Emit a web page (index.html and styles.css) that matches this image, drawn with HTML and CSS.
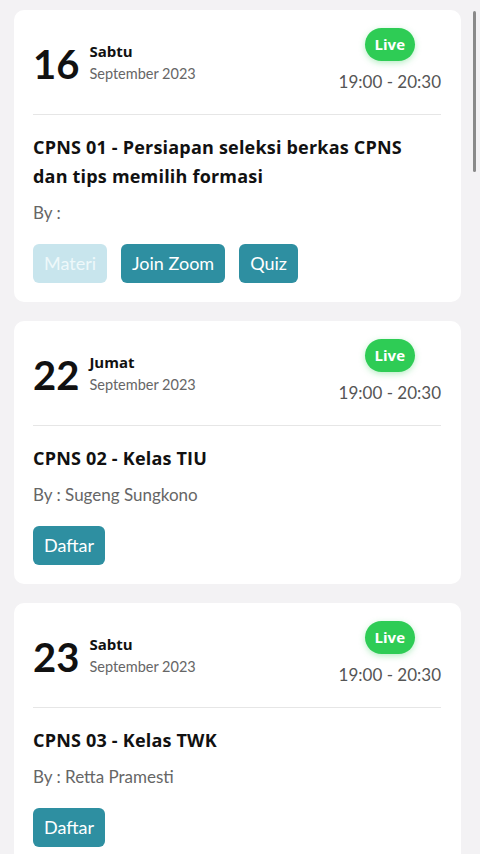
FILE: index.html
```html
<!DOCTYPE html>
<html>
<head>
<meta charset="utf-8">
<link rel="stylesheet" href="styles.css">
</head>
<body>
<div class="list">
  <div class="card">
    <div class="head">
      <div class="date">
        <div class="num">16</div>
        <div class="dm">
          <div class="day">Sabtu</div>
          <div class="month">September 2023</div>
        </div>
      </div>
      <div class="right">
        <span class="live">Live</span>
        <div class="time">19:00 - 20:30</div>
      </div>
    </div>
    <div class="body">
      <div class="title">CPNS 01 - Persiapan seleksi berkas CPNS dan tips memilih formasi</div>
      <div class="by">By :</div>
      <div class="btns">
        <span class="btn disabled">Materi</span>
        <span class="btn">Join Zoom</span>
        <span class="btn">Quiz</span>
      </div>
    </div>
  </div>

  <div class="card">
    <div class="head">
      <div class="date">
        <div class="num">22</div>
        <div class="dm">
          <div class="day">Jumat</div>
          <div class="month">September 2023</div>
        </div>
      </div>
      <div class="right">
        <span class="live">Live</span>
        <div class="time">19:00 - 20:30</div>
      </div>
    </div>
    <div class="body">
      <div class="title">CPNS 02 - Kelas TIU</div>
      <div class="by">By : Sugeng Sungkono</div>
      <div class="btns">
        <span class="btn">Daftar</span>
      </div>
    </div>
  </div>

  <div class="card">
    <div class="head">
      <div class="date">
        <div class="num">23</div>
        <div class="dm">
          <div class="day">Sabtu</div>
          <div class="month">September 2023</div>
        </div>
      </div>
      <div class="right">
        <span class="live">Live</span>
        <div class="time">19:00 - 20:30</div>
      </div>
    </div>
    <div class="body">
      <div class="title">CPNS 03 - Kelas TWK</div>
      <div class="by">By : Retta Pramesti</div>
      <div class="btns">
        <span class="btn">Daftar</span>
      </div>
    </div>
  </div>
</div>
<div class="scrollbar"></div>
</body>
</html>
```
FILE: styles.css
```css
html, body {
  margin: 0;
  padding: 0;
  background: #f3f2f4;
  font-family: "Lato", "Noto Sans", sans-serif;
  color: #111;
  overflow: hidden;
  height: 854px;
}
.list {
  padding: 10px 19px 0 14px;
  display: flex;
  flex-direction: column;
  gap: 19px;
}
.card {
  background: #fff;
  border-radius: 10px;
  padding: 18px 20px 19px 19px;
}
.head {
  display: flex;
  justify-content: space-between;
  align-items: flex-start;
  padding-bottom: 21px;
  border-bottom: 1px solid #e6e6e6;
}
.date {
  display: flex;
  align-items: flex-start;
  margin-top: 14px;
}
.num {
  font-size: 40px;
  font-weight: 700;
  line-height: 40px;
  margin-top: 2px;
}
.dm {
  margin-left: 10px;
}
.day {
  font-family: "Open Sans", sans-serif;
  font-size: 15px;
  font-weight: 700;
  line-height: 18px;
}
.month {
  font-size: 14.5px;
  color: #666;
  line-height: 18px;
  margin-top: 5px;
}
.right {
  display: flex;
  flex-direction: column;
  align-items: center;
}
.live {
  font-family: "Open Sans", sans-serif;
  background: #2ecc55;
  color: #fff;
  font-weight: 700;
  font-size: 15px;
  line-height: 33px;
  height: 33px;
  padding: 0 10px;
  border-radius: 17px;
  box-shadow: 0 2px 6px rgba(46, 204, 85, 0.35);
}
.time {
  font-size: 17px;
  color: #555;
  line-height: 22px;
  margin-top: 10px;
}
.body {
  padding-top: 18px;
}
.title {
  font-family: "Open Sans", sans-serif;
  font-size: 18px;
  font-weight: 700;
  letter-spacing: 0.2px;
  line-height: 29px;
}
.by {
  font-size: 17px;
  color: #666;
  line-height: 22px;
  margin-top: 11px;
}
.btns {
  display: flex;
  gap: 14px;
  margin-top: 20px;
}
.btn {
  background: #2e8fa1;
  color: #fff;
  font-size: 18px;
  line-height: 39px;
  height: 39px;
  padding: 0 11px;
  border-radius: 6px;
}
.btn.disabled {
  background: #c8e5ed;
  color: #eef8fa;
}
.scrollbar {
  position: absolute;
  top: 11px;
  left: 473px;
  width: 3px;
  height: 161px;
  border-radius: 2px;
  background: #8a8a8a;
}
```
